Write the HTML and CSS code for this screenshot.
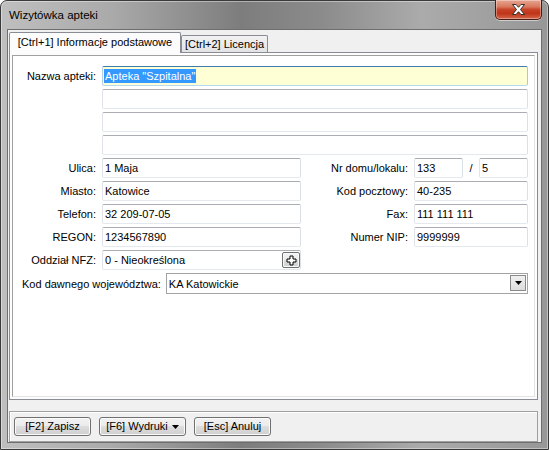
FILE: index.html
```html
<!DOCTYPE html>
<html lang="pl">
<head>
<meta charset="utf-8">
<title>Wizytówka apteki</title>
<link rel="stylesheet" href="styles.css">
</head>
<body>
<div class="window">
  <div class="titlebar">
    <span class="title">Wizytówka apteki</span>
    <div class="close">
      <svg width="15" height="11" viewBox="0 0 15 11"><polygon points="1.5,0.5 5,0.5 7.5,3.3 10,0.5 13.5,0.5 9.5,5.5 13.5,10.5 10,10.5 7.5,7.7 5,10.5 1.5,10.5 5.5,5.5" fill="#fff" stroke="#2e2e2e" stroke-width="1" stroke-linejoin="round"/></svg>
    </div>
  </div>
  <div class="client">
    <div class="tabs">
      <div class="tab active">[Ctrl+1] Informacje podstawowe</div>
      <div class="tab inactive">[Ctrl+2] Licencja</div>
    </div>
    <div class="panel">
      <div class="box">
        <div class="form">
          <div class="lbl">Nazwa apteki:</div>
          <div class="inp wide focus"><span class="sel">Apteka "Szpitalna"</span></div>
          <div class="inp wide"></div>
          <div class="inp wide"></div>
          <div class="inp wide"></div>

          <div class="lbl">Ulica:</div>
          <div class="inp">1 Maja</div>
          <div class="lbl">Nr domu/lokalu:</div>
          <div class="pair"><div class="inp small">133</div><span class="slash">/</span><div class="inp small">5</div></div>

          <div class="lbl">Miasto:</div>
          <div class="inp">Katowice</div>
          <div class="lbl">Kod pocztowy:</div>
          <div class="inp">40-235</div>

          <div class="lbl">Telefon:</div>
          <div class="inp">32 209-07-05</div>
          <div class="lbl">Fax:</div>
          <div class="inp">111 111 111</div>

          <div class="lbl">REGON:</div>
          <div class="inp">1234567890</div>
          <div class="lbl">Numer NIP:</div>
          <div class="inp">9999999</div>

          <div class="lbl">Oddział NFZ:</div>
          <div class="inp withbtn"><span>0 - Nieokreślona</span>
            <div class="plus"><svg width="11" height="11" viewBox="0 0 11 11"><path d="M4 1h3v3h3v3H7v3H4V7H1V4h3z" fill="#fff" stroke="#000" stroke-width="1"/></svg></div>
          </div>
          <div class="empty"></div>
          <div class="empty"></div>

          <div class="comborow">
            <span class="lbl2">Kod dawnego województwa:</span>
            <div class="combo"><span>KA Katowickie</span>
              <div class="drop"><svg width="7" height="4" viewBox="0 0 7 4"><polygon points="0,0 7,0 3.5,4" fill="#000"/></svg></div>
            </div>
          </div>
        </div>
      </div>
    </div>
    <div class="buttonbar">
      <button class="btn b1">[F2] Zapisz</button>
      <button class="btn b2">[F6] Wydruki <svg class="arr" width="7" height="4" viewBox="0 0 7 4"><polygon points="0,0 7,0 3.5,4" fill="#000"/></svg></button>
      <button class="btn b3">[Esc] Anuluj</button>
    </div>
  </div>
</div>
</body>
</html>
```
FILE: styles.css
```css
* { box-sizing: border-box; }
html, body { margin: 0; padding: 0; background: #fff; }
body {
  font-family: "Liberation Sans", Arial, sans-serif;
  font-size: 11px;
  color: #000;
}
.window {
  width: 549px;
  height: 450px;
  border: 1px solid #3a3a3a;
  border-radius: 7px 7px 0 0;
  background: linear-gradient(90deg, #bfbfbf 0, #aaaaaa 110px, #7d7d7d 240px, #8b8b8b 320px, #ababab 420px, #979797 100%);
  padding: 0 7px 7px 7px;
  display: flex;
  flex-direction: column;
  box-shadow: inset 0 0 0 1px rgba(255,255,255,0.4);
}
.titlebar {
  height: 29px;
  display: flex;
  align-items: flex-start;
}
.title {
  font-size: 11.5px;
  line-height: 14px;
  padding-top: 7px;
  padding-left: 1px;
  color: #000;
}
.close {
  margin-left: auto;
  margin-top: -1px;
  margin-right: -1px;
  width: 47px;
  height: 20px;
  border: 1px solid #4a1d14;
  border-top: none;
  border-radius: 0 0 5px 5px;
  background: linear-gradient(#e7a592 0, #d97a5f 35%, #c8442a 50%, #bf3417 70%, #d4664a 100%);
  box-shadow: inset 0 0 0 1px rgba(255,255,255,0.35), 0 1px 0 rgba(255,255,255,0.5);
  display: flex;
  align-items: center;
  justify-content: center;
}
.client {
  flex: 1;
  background: #f0f0f0;
  outline: 1px solid #6e6e6e;
  padding: 2px 3px 0 1px;
  display: flex;
  flex-direction: column;
}
.tabs {
  height: 20px;
  display: flex;
  align-items: flex-start;
  position: relative;
  z-index: 2;
}
.tab {
  border: 1px solid #898c95;
  border-bottom: none;
  text-align: center;
  white-space: nowrap;
}
.tab.active {
  width: 172px;
  height: 21px;
  background: #fcfcfc;
  line-height: 19px;
  border-radius: 2px 2px 0 0;
}
.tab.inactive {
  width: 87px;
  height: 17px;
  margin-top: 3px;
  background: linear-gradient(#f2f2f2, #e3e3e3);
  line-height: 17px;
  border-radius: 2px 2px 0 0;
}
.panel {
  height: 348px;
  border: 1px solid #898c95;
  background: #fcfcfc;
  padding: 2px;
  display: flex;
}
.box {
  flex: 1;
  border: 1px solid;
  border-color: #a0a0a0 #e3e3e3 #e3e3e3 #a0a0a0;
  background: #fff;
  padding: 10px 6px 0 9px;
}
.form {
  display: grid;
  grid-template-columns: 80px 199px 113px 114px;
  grid-template-rows: repeat(9, 20px) 21px;
  row-gap: 3px;
}
.lbl {
  text-align: right;
  padding-right: 6px;
  line-height: 20px;
  white-space: nowrap;
}
.form > .lbl:first-child { grid-row: 1; }
.inp {
  height: 20px;
  border: 1px solid;
  border-color: #abadb3 #dbdfe6 #e3e9ef #e2e3ea;
  border-radius: 2px;
  background: #fff;
  padding: 0 2px;
  line-height: 18px;
  white-space: nowrap;
  overflow: hidden;
}
.inp.wide { grid-column: 2 / 5; }
.inp.focus {
  background: #ffffd6;
  border-color: #3d7bad #a4c9e3 #b7d9ed #b5cfe7;
}
.sel {
  background: #3399ff;
  color: #fff;
  margin-left: -1px;
  padding: 1px 1px;
}
.pair {
  display: flex;
  align-items: center;
}
.inp.small { width: 49px; }
.slash {
  width: 16px;
  text-align: center;
  line-height: 20px;
}
.withbtn {
  display: flex;
  align-items: center;
  justify-content: space-between;
  padding-right: 0;
}
.plus {
  width: 18px;
  height: 16px;
  border: 1px solid #707070;
  border-radius: 2px;
  background: linear-gradient(#f2f2f2 0, #ebebeb 50%, #dddddd 50%, #cfcfcf 100%);
  box-shadow: inset 0 0 0 1px #fafafa;
  display: flex;
  align-items: center;
  justify-content: center;
}
.comborow {
  grid-column: 1 / 5;
  display: flex;
  align-items: center;
  gap: 5px;
}
.lbl2 { white-space: nowrap; }
.combo {
  flex: 1;
  height: 21px;
  border: 1px solid #a3a3a3;
  background: #fff;
  display: flex;
  align-items: center;
  padding-left: 2px;
}
.drop {
  margin-left: auto;
  margin-right: 1px;
  margin-top: -1px;
  width: 16px;
  height: 16px;
  border: 1px solid #8a8a8a;
  background: linear-gradient(#f0f0f0, #dcdcdc);
  display: flex;
  align-items: center;
  justify-content: center;
}
.buttonbar {
  margin-top: 11px;
  height: 31px;
  border: 1px solid #a0a0a0;
  box-shadow: inset 1px 1px 0 #fff;
  padding: 5px 0 0 4px;
  display: flex;
  align-items: flex-start;
  gap: 8px;
}
.btn {
  height: 19px;
  border: 1px solid #707070;
  border-radius: 3px;
  background: linear-gradient(#f2f2f2 0, #ebebeb 50%, #dddddd 50%, #cfcfcf 100%);
  box-shadow: inset 0 0 0 1px #fbfbfb;
  font-family: "Liberation Sans", Arial, sans-serif;
  font-size: 11px;
  color: #000;
  padding: 0;
  line-height: 17px;
  display: flex;
  align-items: center;
  justify-content: center;
  gap: 4px;
}
.b1 { width: 77px; }
.b2 { width: 87px; }
.b3 { width: 77px; }
.arr { margin-top: 1px; }
```
